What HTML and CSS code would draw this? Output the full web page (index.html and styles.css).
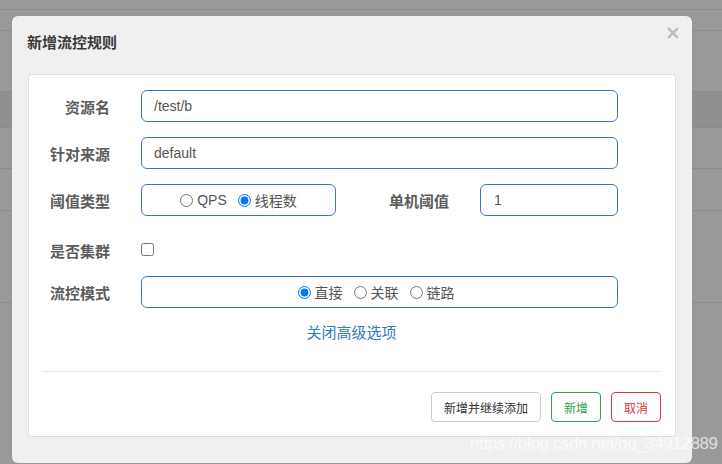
FILE: index.html
```html
<!DOCTYPE html>
<html lang="zh">
<head>
<meta charset="utf-8">
<title>新增流控规则</title>
<link rel="stylesheet" href="styles.css">
</head>
<body>
<div class="bg">
  <div class="bg-row r1"></div>
  <div class="bg-row r2"></div>
  <div class="bg-row r3"></div>
  <div class="bg-row r4"></div>
  <div class="bg-row r5"></div>
  <div class="bg-row r6"></div>
  <div class="bg-row r7"></div>
</div>

<div class="dialog">
  <div class="dialog-header">
    <h4 class="dialog-title">新增流控规则</h4>
    <svg class="close" width="12" height="12" viewBox="0 0 12 12"><path d="M1.2 1.2L10.8 10.8M10.8 1.2L1.2 10.8" stroke="#bcbcbc" stroke-width="2.4" stroke-linecap="butt"/></svg>
  </div>
  <div class="card">
    <div class="form-row">
      <label class="form-label">资源名</label>
      <div class="field field-wide"><span class="value">/test/b</span></div>
    </div>
    <div class="form-row">
      <label class="form-label">针对来源</label>
      <div class="field field-wide"><span class="value">default</span></div>
    </div>
    <div class="form-row">
      <label class="form-label">阈值类型</label>
      <div class="field field-radio radio-type">
        <label class="radio"><input type="radio" name="grade"><span>QPS</span></label>
        <label class="radio"><input type="radio" name="grade" checked><span>线程数</span></label>
      </div>
      <label class="form-label label-single">单机阈值</label>
      <div class="field field-count"><span class="value">1</span></div>
    </div>
    <div class="form-row row-check">
      <label class="form-label">是否集群</label>
      <input class="checkbox" type="checkbox">
    </div>
    <div class="form-row">
      <label class="form-label">流控模式</label>
      <div class="field field-wide field-radio mode-group">
        <label class="radio"><input type="radio" name="mode" checked><span>直接</span></label>
        <label class="radio"><input type="radio" name="mode"><span>关联</span></label>
        <label class="radio"><input type="radio" name="mode"><span>链路</span></label>
      </div>
    </div>
    <div class="advanced"><a class="link">关闭高级选项</a></div>
    <div class="divider"></div>
    <div class="footer">
      <button class="btn btn-default">新增并继续添加</button>
      <button class="btn btn-success">新增</button>
      <button class="btn btn-danger">取消</button>
    </div>
  </div>
</div>

<div class="watermark">https://blog.csdn.net/qq_34912889</div>
</body>
</html>
```

FILE: styles.css
```css
* { box-sizing: border-box; }
html, body { margin: 0; padding: 0; }
body {
  width: 722px;
  height: 464px;
  overflow: hidden;
  background: #999999;
  font-family: "Liberation Sans", "Noto Sans CJK SC", sans-serif;
  position: relative;
}

.bg { display: flex; flex-direction: column; }
.bg-row { border-bottom: 1px solid #8a8a8a; }
.r1 { height: 10px; }
.r2 { height: 21px; }
.r3 { height: 61px; }
.r4 { height: 36px; background: #8f8f8f; }
.r5 { height: 41px; }
.r6 { height: 42px; }
.r7 { height: 92px; }

.dialog {
  position: absolute;
  left: 12px;
  top: 16px;
  width: 680px;
  height: 447px;
  background: #f0f0f0;
  border-radius: 6px;
  display: flex;
  flex-direction: column;
}

.dialog-header {
  height: 58px;
  display: flex;
  justify-content: space-between;
  align-items: flex-start;
  padding: 11px 13px 0 15px;
}
.dialog-title {
  margin: 6px 0 0 0;
  font-size: 15px;
  line-height: 20px;
  font-weight: 700;
  color: #3a3a3a;
}
.close { display: block; }

.card {
  margin: 0 16px;
  height: 363px;
  background: #ffffff;
  border: 1px solid #dddddd;
  border-radius: 4px;
  padding: 15px 14px 14px 13px;
  display: flex;
  flex-direction: column;
}

.form-row {
  display: flex;
  align-items: center;
  height: 32px;
  margin-bottom: 15px;
}
.row-check { height: 30px; padding-top: 7px; }

.form-label {
  width: 68px;
  margin-right: 31px;
  text-align: right;
  font-size: 15px;
  font-weight: 700;
  color: #5c5c5c;
  line-height: 20px;
  padding-top: 4px;
  flex: none;
}
.label-single { width: 60px; margin-left: 53px; }

.field {
  height: 32px;
  border: 1px solid #3a7bbf;
  border-radius: 6px;
  display: flex;
  align-items: center;
  padding: 0 12px;
  flex: none;
}
.field-wide { width: 477px; }
.field-count { width: 138px; padding-left: 13px; }
.radio-type { width: 195px; }
.value { font-size: 14px; color: #555555; }

.field-radio { justify-content: center; gap: 11px; padding: 0; }
.mode-group { padding-right: 7px; }
.radio {
  display: flex;
  align-items: center;
  gap: 4px;
  font-size: 14px;
  color: #555555;
}
.radio input {
  margin: 0;
  width: 13px;
  height: 13px;
}

.checkbox { margin: 0; width: 13px; height: 13px; }

.advanced {
  text-align: center;
  line-height: 20px;
  height: 20px;
  margin-top: 0;
}
.link { font-size: 15px; color: #337ab7; }

.divider {
  height: 1px;
  background: #e5e5e5;
  margin-top: 28px;
}

.footer {
  display: flex;
  justify-content: flex-end;
  gap: 10px;
  margin-top: 20px;
}
.btn {
  height: 30px;
  padding: 0 12px;
  font-family: "Liberation Sans", "Noto Sans CJK SC", sans-serif;
  font-size: 12px;
  background: #ffffff;
  border-radius: 4px;
  border: 1px solid #cccccc;
  color: #333333;
}
.btn-default { width: 110px; }
.btn-success { width: 50px; border-color: #2ea44f; color: #2ea44f; }
.btn-danger { width: 50px; border-color: #dc3545; color: #dc3545; }

.watermark {
  position: absolute;
  left: 470px;
  top: 434px;
  font-size: 17px;
  letter-spacing: -0.4px;
  color: rgba(255, 255, 255, 0.7);
  white-space: nowrap;
}
```
